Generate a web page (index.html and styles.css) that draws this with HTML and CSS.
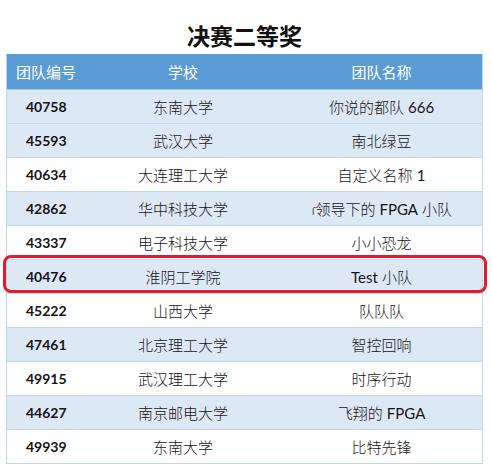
FILE: index.html
```html
<!DOCTYPE html>
<html lang="zh">
<head>
<meta charset="utf-8">
<title>决赛二等奖</title>
<link rel="stylesheet" href="styles.css">
</head>
<body>
<div class="page">
  <h1 class="title">决赛二等奖</h1>
  <div class="table">
    <div class="row head">
      <div class="c1">团队编号</div><div class="c2">学校</div><div class="c3">团队名称</div>
    </div>
    <div class="row alt"><div class="c1">40758</div><div class="c2">东南大学</div><div class="c3">你说的都队 <span class="lat">666</span></div></div>
    <div class="row alt"><div class="c1">45593</div><div class="c2">武汉大学</div><div class="c3">南北绿豆</div></div>
    <div class="row"><div class="c1">40634</div><div class="c2">大连理工大学</div><div class="c3">自定义名称 <span class="lat">1</span></div></div>
    <div class="row alt"><div class="c1">42862</div><div class="c2">华中科技大学</div><div class="c3">ɾ领导下的 <span class="lat">FPGA</span> 小队</div></div>
    <div class="row"><div class="c1">43337</div><div class="c2">电子科技大学</div><div class="c3">小小恐龙</div></div>
    <div class="row alt"><div class="c1">40476</div><div class="c2">淮阴工学院</div><div class="c3"><span class="lat">Test</span> 小队</div><span class="mark"></span></div>
    <div class="row"><div class="c1">45222</div><div class="c2">山西大学</div><div class="c3">队队队</div></div>
    <div class="row alt"><div class="c1">47461</div><div class="c2">北京理工大学</div><div class="c3">智控回响</div></div>
    <div class="row"><div class="c1">49915</div><div class="c2">武汉理工大学</div><div class="c3">时序行动</div></div>
    <div class="row alt"><div class="c1">44627</div><div class="c2">南京邮电大学</div><div class="c3">飞翔的 <span class="lat">FPGA</span></div></div>
    <div class="row"><div class="c1">49939</div><div class="c2">东南大学</div><div class="c3">比特先锋</div></div>
  </div>
</div>
</body>
</html>
```

FILE: styles.css
```css
* { box-sizing: border-box; }
html, body { margin: 0; padding: 0; background: #ffffff; }
body {
  font-family: "Lato", "Noto Sans CJK SC", sans-serif;
  color: #151515;
}
.page {
  width: 492px;
  padding: 0 9px 0 6px;
}
.title {
  margin: 0;
  height: 54px;
  padding-top: 20px;
  text-align: center;
  font-family: "Noto Sans CJK SC", sans-serif;
  font-size: 23px;
  line-height: 30px;
  font-weight: 700;
  color: #111;
}
.table {
  width: 477px;
  border-left: 1px solid #bdd7ee;
  border-right: 1px solid #bdd7ee;
}
.row {
  position: relative;
  display: flex;
  height: 34px;
  align-items: center;
  border-bottom: 1px solid #c3d9ef;
  font-size: 15px;
  font-weight: 300;
}
.row.head {
  height: 36px;
  background: #5b9bd5;
  color: #ffffff;
  font-weight: 400;
  border-bottom: 1px solid #a9c8e8;
}
.row.alt { background: #dde8f5; }
.c1 { width: 78px; padding-left: 19px; font-weight: 700; font-size: 14px; }
.c2 { width: 196px; text-align: center; }
.c3 { flex: 1; text-align: center; }
.lat { font-weight: 400; }
.head .c1 { padding-left: 0; text-align: center; font-weight: 400; font-size: 15px; }
.mark {
  position: absolute;
  left: -4px;
  right: -5px;
  top: -5px;
  bottom: 0;
  border: 3px solid #e21b2a;
  border-radius: 8px;
  pointer-events: none;
}
```
